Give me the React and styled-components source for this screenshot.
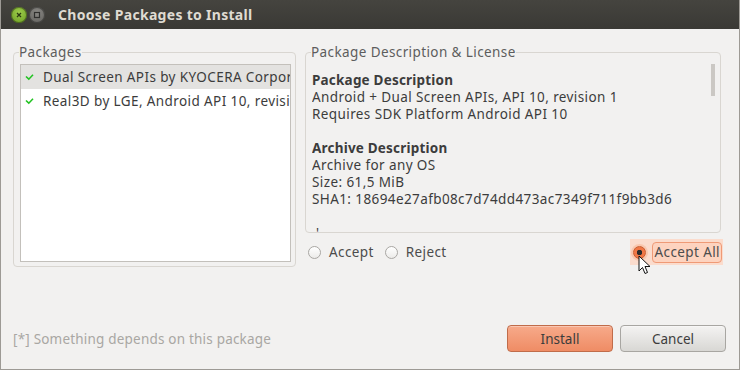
import React, { useState } from 'react'
import styled, { createGlobalStyle } from 'styled-components'

const GlobalStyle = createGlobalStyle`
  html, body {
    margin: 0;
    padding: 0;
    background: #f2f1f0;
  }
  body {
    font-family: "Noto Sans", "DejaVu Sans", sans-serif;
    font-size: 13.5px;
    letter-spacing: 0.4px;
    color: #3c3c3c;
  }
`

const Window = styled.div`
  width: 740px;
  height: 370px;
  box-sizing: border-box;
  display: flex;
  flex-direction: column;
  background: #f2f1f0;
  border: 1px solid #9d9a95;
  border-top: 0;
  position: relative;
  overflow: hidden;
`

const TitleBar = styled.div`
  height: 29px;
  margin: 0 -1px;
  flex: none;
  display: flex;
  align-items: center;
  padding: 0 0 0 11px;
  background: linear-gradient(#45443f, #3a3935);
  color: #dfdbd2;
`

const WinButton = styled.span`
  width: 16px;
  height: 16px;
  border-radius: 50%;
  display: flex;
  align-items: center;
  justify-content: center;
  margin-right: 2px;
  background: ${p => p.$close
    ? 'radial-gradient(circle at 50% 35%, #9dcc4b, #6a9a21)'
    : 'radial-gradient(circle at 50% 35%, #8a8985, #5d5c58)'};
  box-shadow: inset 0 0 0 1px rgba(0, 0, 0, 0.35);
`

const Title = styled.span`
  margin-left: 11px;
  font-weight: bold;
  font-size: 14px;
  letter-spacing: 0.3px;
`

const Body = styled.div`
  flex: 1;
  display: flex;
  flex-direction: column;
  padding: 15px 13px 0 12px;
`

const Columns = styled.div`
  display: flex;
  gap: 9px;
`

const Group = styled.fieldset`
  margin: 0;
  box-sizing: border-box;
  width: ${p => p.$width}px;
  height: ${p => p.$height}px;
  border: 1px solid #d9d6d1;
  border-radius: 4px;
  padding: 3px 4px 4px 6px;
  display: flex;
  flex-direction: column;
  min-width: 0;
`

const Legend = styled.legend`
  padding: 0;
  margin-left: -1px;
  color: #5d5d5d;
  line-height: 17px;
`

const List = styled.ul`
  list-style: none;
  margin: 0;
  padding: 0;
  flex: 1;
  background: #fff;
  border: 1px solid #c3c0bb;
  overflow: hidden;
`

const Row = styled.li`
  height: 24px;
  display: flex;
  align-items: center;
  padding-left: 4px;
  white-space: nowrap;
  background: ${p => (p.$selected ? '#e3e2e0' : 'transparent')};
  color: #3c3c3c;
`

const Check = styled.svg`
  width: 9px;
  height: 8px;
  margin-right: 9px;
  flex: none;
`

const RightColumn = styled.div`
  display: flex;
  flex-direction: column;
  width: 416px;
`

const Description = styled.div`
  position: relative;
  flex: 1;
  overflow: hidden;
  padding: 8px 0 0 0;
  line-height: 17px;
`

const Heading = styled.div`
  font-weight: bold;
  letter-spacing: 0.2px;
`

const Line = styled.div`
  height: 17px;
  white-space: nowrap;
`

const ScrollThumb = styled.div`
  position: absolute;
  right: 1px;
  top: 0;
  width: 4px;
  height: 32px;
  background: #cbc8c4;
`

const RadioRow = styled.div`
  display: flex;
  align-items: center;
  height: 26px;
  margin-top: 6px;
  padding-left: 3px;
`

const RadioLabel = styled.label`
  display: flex;
  align-items: center;
  gap: 8px;
  margin-right: 11px;
  color: #4c4c4c;
`

const RadioCircle = styled.span`
  width: 13px;
  height: 13px;
  box-sizing: border-box;
  border-radius: 50%;
  border: 1px solid ${p => (p.$on ? '#c85a2c' : '#a9a7a3')};
  background: ${p => (p.$on
    ? 'radial-gradient(circle, #2b2b2b 0 2.5px, #f07746 3px)'
    : 'linear-gradient(#ffffff, #ecebe9)')};
  box-shadow: ${p => (p.$on ? '0 0 0 2px #f9c7ae' : 'none')};
`

const AcceptAll = styled.label`
  margin-left: auto;
  margin-right: -2px;
  display: flex;
  align-items: center;
  gap: 6px;
  height: 26px;
  padding: 0 1px 0 3px;
  background: #fbdccd;
  color: #4c4c4c;
`

const Focus = styled.span`
  border: 1px solid #ef9a76;
  border-radius: 4px;
  padding: 1px 1px 1px 2px;
  background: #fdd3bf;
  line-height: 17px;
`

const Footer = styled.div`
  margin-top: auto;
  height: 44px;
  display: flex;
  align-items: flex-start;
`

const Hint = styled.span`
  color: #a9a7a3;
  margin-top: 5px;
  flex: 1;
  letter-spacing: 0.2px;
`

const Button = styled.button`
  width: 106px;
  height: 27px;
  margin-left: 7px;
  border-radius: 4px;
  font: inherit;
  color: #3c3c3c;
  border: 1px solid ${p => (p.$primary ? '#c06c4a' : '#a8a6a2')};
  background: ${p => (p.$primary
    ? 'linear-gradient(#f7aa8a, #ef8c65)'
    : 'linear-gradient(#f4f3f2, #d8d7d4)')};
  box-shadow: inset 0 1px 0 rgba(255, 255, 255, 0.35);
`

const Cursor = styled.svg`
  position: absolute;
  left: 637px;
  top: 255px;
  width: 13px;
  height: 20px;
`

const packages = [
  'Dual Screen APIs by KYOCERA Corporation, Android API 10, revision 1',
  'Real3D by LGE, Android API 10, revision 3'
]

function CheckMark () {
  return (
    <Check viewBox='0 0 9 8'>
      <path d='M1 3.5 L3.8 6.2 L8 1.8' fill='none' stroke='#22c322' strokeWidth='1.6' />
    </Check>
  )
}

export default function App () {
  const [selected] = useState(0)

  return (
    <>
      <GlobalStyle />
      <Window>
        <TitleBar>
          <WinButton $close>
            <svg width='8' height='8' viewBox='0 0 8 8'>
              <path d='M2 2 L6 6 M6 2 L2 6' stroke='#2e3a12' strokeWidth='1.3' />
            </svg>
          </WinButton>
          <WinButton>
            <svg width='8' height='8' viewBox='0 0 8 8'>
              <rect x='1.5' y='1.5' width='5' height='5' fill='none' stroke='#2f2f2d' strokeWidth='1.2' />
            </svg>
          </WinButton>
          <Title>Choose Packages to Install</Title>
        </TitleBar>
        <Body>
          <Columns>
            <Group $width={283} $height={223}>
              <Legend>Packages</Legend>
              <List>
                {packages.map((text, i) => (
                  <Row key={text} $selected={i === selected}>
                    <CheckMark />
                    {text}
                  </Row>
                ))}
              </List>
            </Group>
            <RightColumn>
              <Group $width={416} $height={189}>
                <Legend>Package Description &amp; License</Legend>
                <Description>
                  <Heading>Package Description</Heading>
                  <Line>Android + Dual Screen APIs, API 10, revision 1</Line>
                  <Line>Requires SDK Platform Android API 10</Line>
                  <Line />
                  <Heading>Archive Description</Heading>
                  <Line>Archive for any OS</Line>
                  <Line>Size: 61,5 MiB</Line>
                  <Line>SHA1: 18694e27afb08c7d74dd473ac7349f711f9bb3d6</Line>
                  <Line />
                  <Line>&nbsp;'</Line>
                  <ScrollThumb />
                </Description>
              </Group>
              <RadioRow>
                <RadioLabel><RadioCircle />Accept</RadioLabel>
                <RadioLabel><RadioCircle />Reject</RadioLabel>
                <AcceptAll>
                  <RadioCircle $on />
                  <Focus>Accept All</Focus>
                </AcceptAll>
              </RadioRow>
            </RightColumn>
          </Columns>
          <Footer>
            <Hint>[*] Something depends on this package</Hint>
            <Button $primary>Install</Button>
            <Button>Cancel</Button>
          </Footer>
        </Body>
        <Cursor viewBox='0 0 13 20'>
          <path d='M1 1 L1 16 L4.5 12.5 L7 18.5 L9.5 17.5 L7 11.5 L12 11.5 Z' fill='#fff' stroke='#111' strokeWidth='1' strokeLinejoin='round' />
        </Cursor>
      </Window>
    </>
  )
}
